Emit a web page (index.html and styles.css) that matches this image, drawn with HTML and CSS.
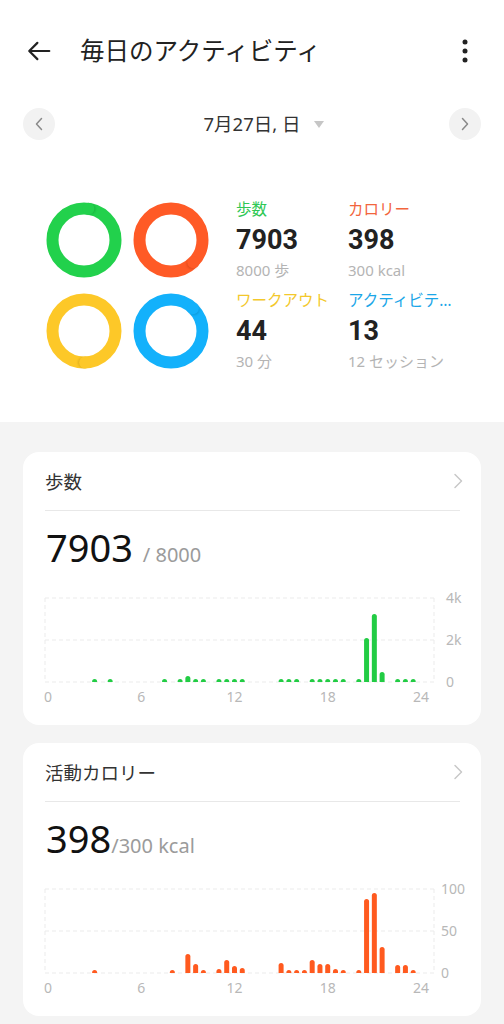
FILE: index.html
```html
<!DOCTYPE html>
<html lang="ja">
<head>
    <meta charset="UTF-8">
    <meta name="viewport" content="width=device-width, initial-scale=1.0">
    <title>毎日のアクティビティ</title>
    <link rel="stylesheet" href="styles.css">
</head>
<body>
    <div class="top">
        <div class="topbar">
            <button class="icon-btn back">
                <svg width="26" height="26" viewBox="0 0 24 24" fill="none" stroke="#222" stroke-width="2" stroke-linecap="round" stroke-linejoin="round">
                    <path d="M21.5 12H3.5M10.5 4.5L3 12l7.5 7.5"/>
                </svg>
            </button>
            <h1 class="title">毎日のアクティビティ</h1>
            <button class="icon-btn more">
                <svg width="6" height="24" viewBox="0 0 6 24" fill="#222">
                    <circle cx="3" cy="3" r="2.5"/>
                    <circle cx="3" cy="12" r="2.5"/>
                    <circle cx="3" cy="21" r="2.5"/>
                </svg>
            </button>
        </div>

        <div class="date-row">
            <button class="round-btn">
                <svg width="8" height="14" viewBox="0 0 8 14" fill="none" stroke="#8a8a8a" stroke-width="1.5" stroke-linecap="round" stroke-linejoin="round"><path d="M6.5 1.5L1.5 7l5 5.5"/></svg>
            </button>
            <div class="date-label">7月27日, 日</div>
            <button class="round-btn">
                <svg width="8" height="14" viewBox="0 0 8 14" fill="none" stroke="#8a8a8a" stroke-width="1.5" stroke-linecap="round" stroke-linejoin="round"><path d="M1.5 1.5L6.5 7l-5 5.5"/></svg>
            </button>
        </div>

        <div class="summary">
            <div class="rings">
                <svg class="ring" id="ringSteps" width="76" height="76"></svg>
                <svg class="ring" id="ringCal" width="76" height="76"></svg>
                <svg class="ring" id="ringWork" width="76" height="76"></svg>
                <svg class="ring" id="ringActive" width="76" height="76"></svg>
            </div>
            <div class="stats">
                <div class="stat">
                    <div class="stat-label green">歩数</div>
                    <div class="stat-value">7903</div>
                    <div class="stat-sub">8000 歩</div>
                </div>
                <div class="stat">
                    <div class="stat-label orange">カロリー</div>
                    <div class="stat-value">398</div>
                    <div class="stat-sub">300 kcal</div>
                </div>
                <div class="stat">
                    <div class="stat-label yellow">ワークアウト</div>
                    <div class="stat-value">44</div>
                    <div class="stat-sub">30 分</div>
                </div>
                <div class="stat">
                    <div class="stat-label blue">アクティビテ…</div>
                    <div class="stat-value">13</div>
                    <div class="stat-sub">12 セッション</div>
                </div>
            </div>
        </div>
    </div>

    <div class="cards">
        <div class="card">
            <div class="card-head">
                <span>歩数</span>
                <svg class="chev" width="10" height="16" viewBox="0 0 10 16" fill="none" stroke="#c8c8c8" stroke-width="1.5" stroke-linecap="round" stroke-linejoin="round"><path d="M2 1.5L8.5 8 2 14.5"/></svg>
            </div>
            <div class="card-value">7903 <span class="goal">/ 8000</span></div>
            <svg class="chart" id="stepsChart" width="458" height="140"></svg>
        </div>

        <div class="card">
            <div class="card-head">
                <span>活動カロリー</span>
                <svg class="chev" width="10" height="16" viewBox="0 0 10 16" fill="none" stroke="#c8c8c8" stroke-width="1.5" stroke-linecap="round" stroke-linejoin="round"><path d="M2 1.5L8.5 8 2 14.5"/></svg>
            </div>
            <div class="card-value">398<span class="goal">/300 kcal</span></div>
            <svg class="chart" id="calChart" width="458" height="140"></svg>
        </div>
    </div>

    <script>
        // rings: full circle + end cap with a little shadow where it overlaps
        function drawRing(id, color, shade, angle) {
            const r = 31.5;
            const a = angle * Math.PI / 180;
            const cx = 38 + r * Math.sin(a);
            const cy = 38 - r * Math.cos(a);
            const sx = cx + Math.cos(a) * 1.6;
            const sy = cy + Math.sin(a) * 1.6;
            document.getElementById(id).innerHTML = `
                <defs><filter id="${id}Blur" x="-50%" y="-50%" width="200%" height="200%"><feGaussianBlur stdDeviation="1.3"/></filter></defs>
                <circle cx="38" cy="38" r="${r}" fill="none" stroke="${color}" stroke-width="12"/>
                <circle cx="${sx}" cy="${sy}" r="5.4" fill="${shade}" opacity="0.45" filter="url(#${id}Blur)"/>
                <circle cx="${cx}" cy="${cy}" r="6" fill="${color}"/>`;
        }

        drawRing("ringSteps", "#22d14c", "#0f8a2c", 8);
        drawRing("ringCal", "#ff5a26", "#b83410", 135);
        drawRing("ringWork", "#fdc828", "#b08a10", 178);
        drawRing("ringActive", "#13b1fb", "#0a76a8", 44);

        // half-hour bar charts, heights in px
        function drawChart(id, bars, color, yLabels, labelX) {
            const left = 22, right = 411, top = 13, mid = 55, base = 97;
            let html = "";
            [top, mid, base].forEach(y => {
                html += `<line x1="${left}" y1="${y}" x2="${right}" y2="${y}" class="grid"/>`;
            });
            html += `<line x1="${left}" y1="${top}" x2="${left}" y2="${base}" class="grid"/>`;
            html += `<line x1="${right}" y1="${top}" x2="${right}" y2="${base}" class="grid"/>`;

            bars.forEach(([i, h]) => {
                const x = 25 + i * 7.77;
                const y = base - h;
                html += `<path d="M${x - 2.5} ${base}V${y + 2.5}A2.5 2.5 0 0 1 ${x + 2.5} ${y + 2.5}V${base}Z" fill="${color}"/>`;
            });

            [0, 6, 12, 18, 24].forEach(hr => {
                html += `<text x="${25 + hr * 15.54}" y="117" text-anchor="middle" class="axis">${hr}</text>`;
            });
            [top, mid, base].forEach((y, k) => {
                html += `<text x="${labelX}" y="${y + 5}" class="axis">${yLabels[k]}</text>`;
            });
            document.getElementById(id).innerHTML = html;
        }

        const stepBars = [[6, 3], [8, 3], [15, 3], [17, 3], [18, 6], [19, 3], [20, 3], [22, 3], [23, 3],
            [24, 3], [25, 3], [30, 3], [31, 3], [32, 3], [34, 3], [35, 3], [36, 3], [37, 3], [38, 3],
            [40, 3], [41, 44], [42, 68], [43, 10], [45, 3], [46, 3], [47, 3]];

        const calBars = [[6, 3], [16, 3], [18, 19], [19, 9], [20, 3], [22, 4], [23, 13], [24, 7], [25, 5],
            [30, 10], [31, 3], [32, 3], [33, 3], [34, 13], [35, 9], [36, 9], [37, 4], [38, 3],
            [40, 3], [41, 74], [42, 80], [43, 26], [45, 8], [46, 8], [47, 3]];

        drawChart("stepsChart", stepBars, "#22cc44", ["4k", "2k", "0"], 423);
        drawChart("calChart", calBars, "#ff5a1f", ["100", "50", "0"], 418);
    </script>
</body>
</html>
```

FILE: styles.css
```css
body {
    margin: 0;
    font-family: "Noto Sans", "Noto Sans CJK JP", sans-serif;
    background-color: #f4f4f4;
    color: #222;
}
button {
    border: none;
    background: none;
    padding: 0;
    cursor: pointer;
}
.top {
    background: #fff;
}
.topbar {
    display: flex;
    align-items: center;
    height: 56px;
    padding: 23px 0 0 26px;
}
.back {
    display: flex;
    width: 26px;
    height: 26px;
}
.title {
    flex: 1;
    margin: 0 0 0 28px;
    font-size: 24.5px;
    font-weight: 400;
    line-height: 32px;
    color: #222;
}
.more {
    display: flex;
    margin-right: 36px;
}
.date-row {
    display: flex;
    align-items: center;
    justify-content: space-between;
    height: 32px;
    margin-top: 29px;
    padding: 0 23px;
}
.round-btn {
    display: flex;
    align-items: center;
    justify-content: center;
    width: 32px;
    height: 32px;
    border-radius: 50%;
    background: #f2f2f2;
}
.date-label {
    position: relative;
    font-size: 18.5px;
    color: #333;
    line-height: 24px;
}
.date-label::after {
    content: "";
    position: absolute;
    left: calc(100% + 13px);
    top: 9px;
    border-left: 5px solid transparent;
    border-right: 5px solid transparent;
    border-top: 7px solid #c6c6c6;
}
.summary {
    display: flex;
    padding: 59px 0 51px 46px;
}
.rings {
    display: grid;
    grid-template-columns: 76px 76px;
    column-gap: 11px;
    row-gap: 12px;
    margin-top: 3px;
}
.ring {
    display: block;
}
.stats {
    display: grid;
    grid-template-columns: 112px 120px;
    row-gap: 10px;
    margin-left: 27px;
}
.stat-label {
    font-size: 15.5px;
    line-height: 20px;
    white-space: nowrap;
}
.green { color: #2fc855; }
.orange { color: #f2653d; }
.yellow { color: #f3c82c; }
.blue { color: #1ba6e8; }
.stat-value {
    margin-top: 5px;
    font-family: Roboto, "Noto Sans", sans-serif;
    font-size: 27px;
    font-weight: 700;
    line-height: 32px;
    color: #222;
}
.stat-sub {
    margin-top: 4px;
    font-size: 15px;
    line-height: 20px;
    color: #b4b4b4;
    white-space: nowrap;
}
.cards {
    display: flex;
    flex-direction: column;
    gap: 18px;
    padding: 30px 23px 8px;
}
.card {
    background: #fff;
    border-radius: 16px;
    overflow: hidden;
}
.card-head {
    display: flex;
    align-items: center;
    justify-content: space-between;
    height: 58px;
    margin: 0 21px 0 22px;
    border-bottom: 1px solid #e8e8e8;
    font-size: 18.5px;
    color: #333;
}
.chev {
    margin-right: -3px;
}
.card-value {
    height: 44px;
    margin: 14px 0 0 23px;
    font-size: 38px;
    line-height: 44px;
    color: #111;
}
.goal {
    font-size: 20px;
    line-height: 1;
    color: #9b9b9b;
}
.chart {
    display: block;
    margin-top: 16px;
}
.grid {
    stroke: #ebebeb;
    stroke-width: 1;
    stroke-dasharray: 4 3;
}
.axis {
    font-family: "Noto Sans", sans-serif;
    font-size: 14px;
    fill: #b8b8b8;
}
```
